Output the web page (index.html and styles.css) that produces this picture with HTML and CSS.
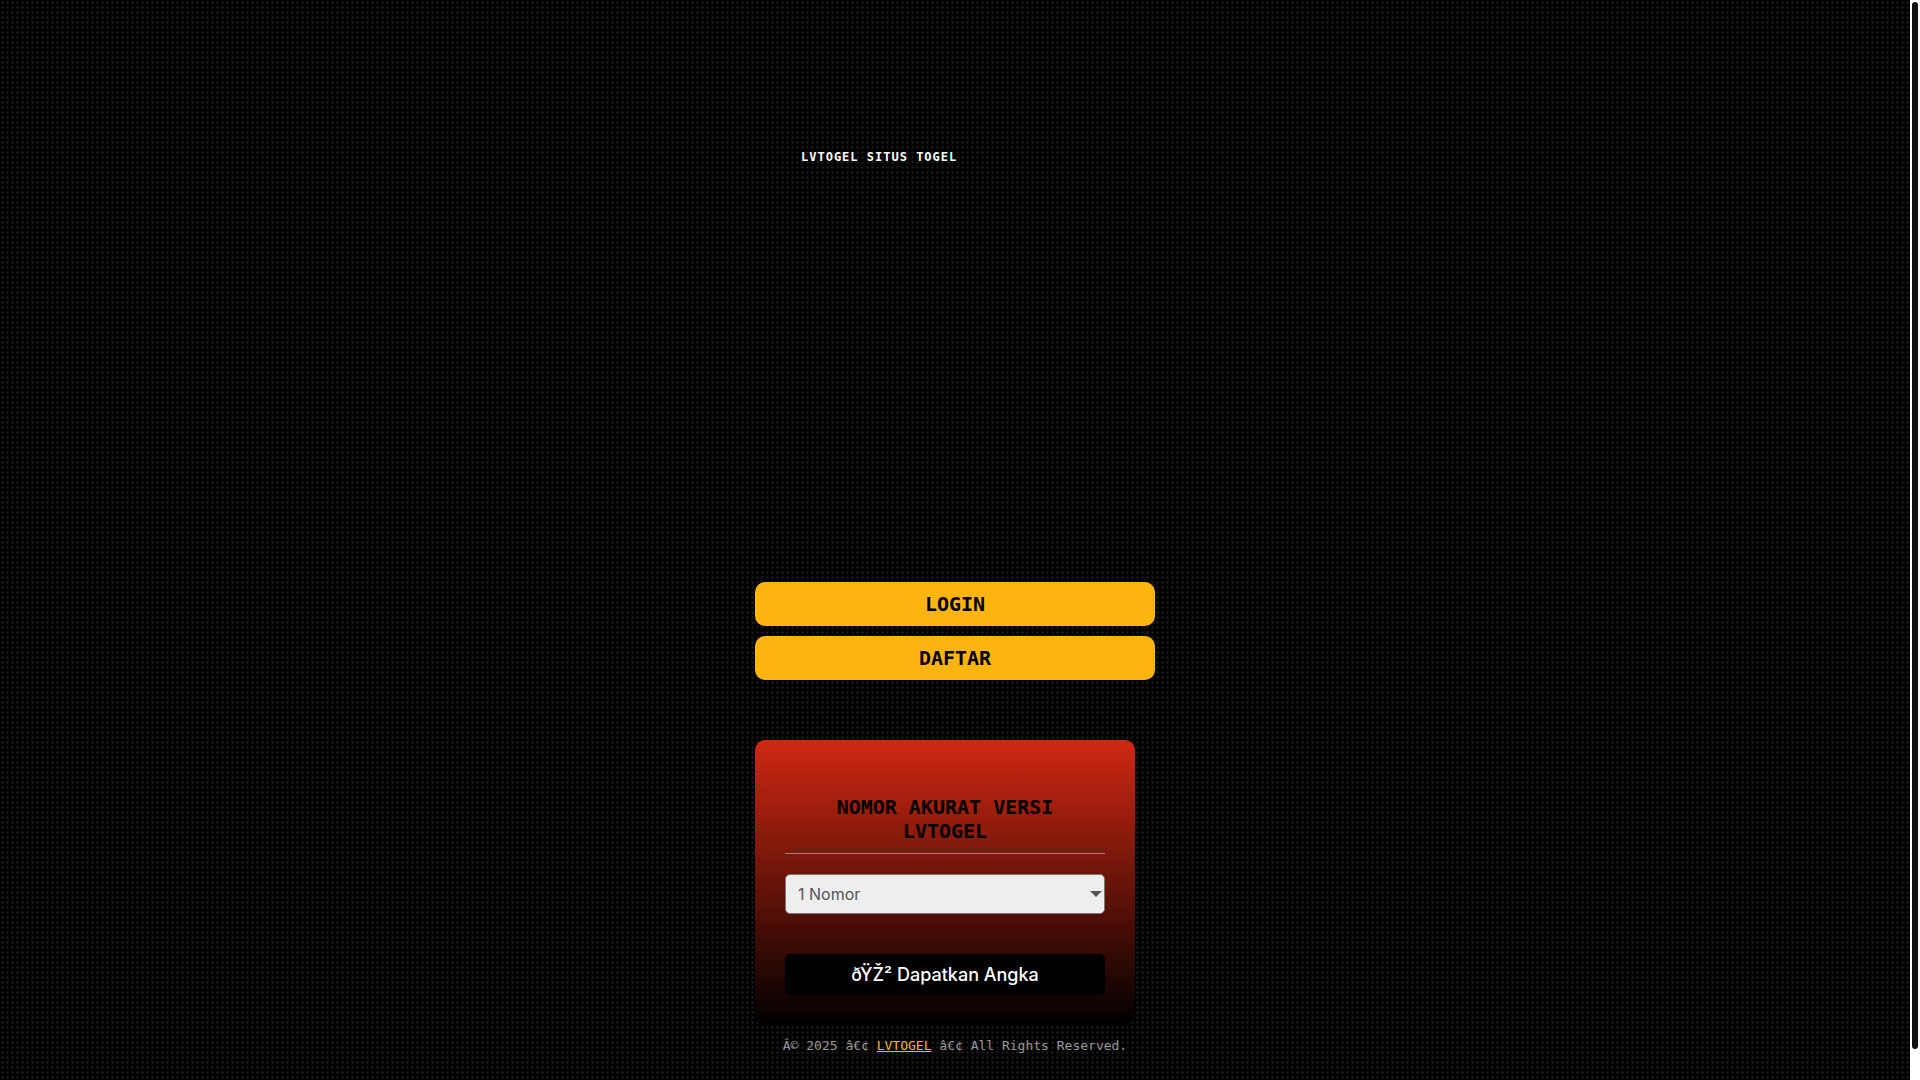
FILE: index.html
```html
<!DOCTYPE html>
<html lang="id">
<head>
<meta charset="utf-8">
<meta name="viewport" content="width=device-width, initial-scale=1">
<title>LVTOGEL SITUS TOGEL</title>
<link rel="stylesheet" href="styles.css">
</head>
<body>
<main class="page">
  <header class="hero">
    <h1 class="hero-title">LVTOGEL SITUS TOGEL</h1>
  </header>
  <nav class="actions">
    <a class="action" href="#login">LOGIN</a>
    <a class="action" href="#daftar">DAFTAR</a>
  </nav>
  <form class="card">
    <h2 class="card-title" id="card-title">NOMOR AKURAT VERSI LVTOGEL</h2>
    <div class="select-wrap">
      <select class="select" aria-labelledby="card-title">
        <option>1 Nomor</option>
        <option>2 Nomor</option>
        <option>3 Nomor</option>
      </select>
      <svg class="caret" viewBox="0 0 10 5" aria-hidden="true"><path d="M0 0h10L5 5z" fill="#555"/></svg>
    </div>
    <button class="generate" type="button">ðŸŽ² Dapatkan Angka</button>
  </form>
  <footer class="footer">Â© 2025 â€¢ <a class="footer-link" href="#">LVTOGEL</a> â€¢ All Rights Reserved.</footer>
</main>
<div class="scroll-track" aria-hidden="true"><div class="scroll-thumb"></div></div>
</body>
</html>
```

FILE: styles.css
```css
* {
  box-sizing: border-box;
}

html {
  scrollbar-width: none;
}

body {
  display: grid;
  grid-template-columns: 1fr 10px;
  margin: 0;
  background: #000 radial-gradient(#222 10%, transparent 50%) 0 0 / 5px 5px;
  color: #fff;
  font-family: monospace;
  font-size: 16px;
  text-rendering: optimizeSpeed;
}

.scroll-track {
  position: sticky;
  top: 0;
  height: 100vh;
  padding: 2px;
  background: #fff;
}

.scroll-thumb {
  height: calc(100% - 29px);
  border-radius: 3px;
  background: #111;
}

.page {
  width: 100%;
  max-width: 400px;
  margin: 0 auto;
  padding-bottom: 56px;
}

.hero {
  height: 582px;
  padding: 148px 46px 0;
}

.hero-title {
  margin: 0;
  font-size: 12px;
  line-height: 18px;
  letter-spacing: 1px;
}

.actions {
  display: grid;
  gap: 10px;
}

.action {
  padding: 10px;
  border-radius: 10px;
  background: #fcb40f;
  color: #000;
  font-size: 20px;
  font-weight: 700;
  line-height: 24px;
  text-align: center;
  text-decoration: none;
}

.card {
  margin: 60px 20px 0 0;
  padding: 55px 30px 30px;
  border-radius: 10px;
  background: linear-gradient(to bottom, #d02812, #000);
}

.card-title {
  margin: 0 0 20px;
  padding: 0 10px 10px;
  border-bottom: 1px solid #888;
  color: #000;
  font-size: 20px;
  line-height: 24px;
  text-align: center;
}

.select-wrap {
  display: grid;
  align-items: center;
  margin-bottom: 40px;
}

.select,
.caret {
  grid-area: 1 / 1;
}

.select {
  appearance: none;
  width: 100%;
  height: 40px;
  padding: 0 12px;
  border: 1px solid #777;
  border-radius: 5px;
  background: #eee;
  color: #555;
  font: 16px Inter, sans-serif;
  text-rendering: optimizeSpeed;
}

.caret {
  justify-self: end;
  width: 12px;
  height: 6px;
  margin-right: 3px;
  pointer-events: none;
}

.generate {
  display: block;
  width: 100%;
  height: 41px;
  border: 0;
  border-radius: 5px;
  background: #000;
  color: #fff;
  font: 500 18px Inter, sans-serif;
  text-rendering: optimizeSpeed;
}

.footer {
  margin-top: 11px;
  color: #999;
  font-size: 13px;
  line-height: 20px;
  text-align: center;
}

.footer-link {
  color: #fcb40f;
}
```
